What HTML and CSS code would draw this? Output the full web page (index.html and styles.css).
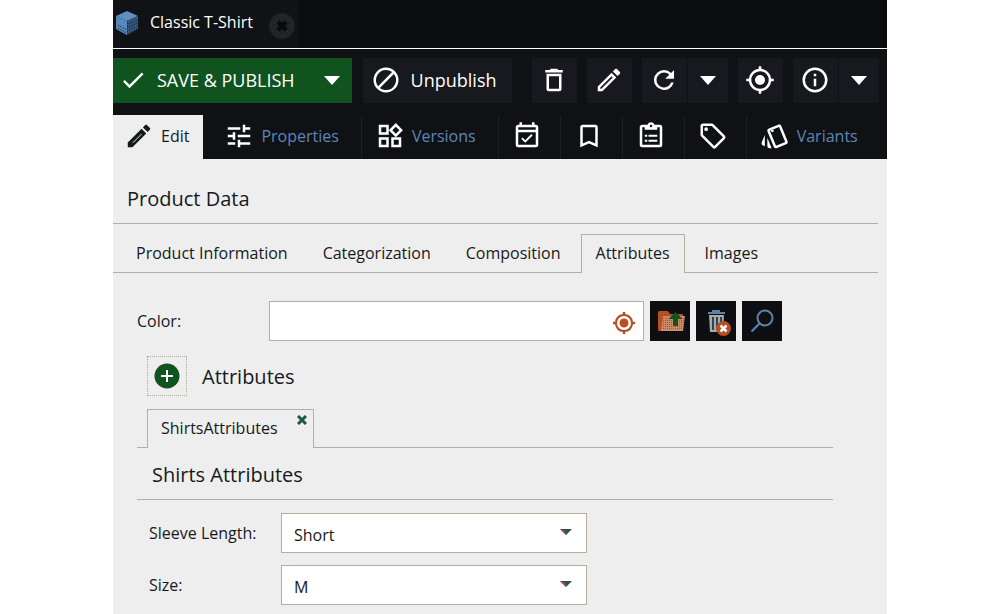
FILE: index.html
```html
<!DOCTYPE html>
<html lang="en">
<head>
<meta charset="utf-8">
<title>Classic T-Shirt</title>
<meta name="viewport" content="width=device-width, initial-scale=1">
<link rel="stylesheet" href="styles.css">
</head>
<body>
<div class="app">
  <header class="doc-bar">
    <div class="doc-tab">
      <svg class="doc-cube" viewBox="0 0 24 26" aria-hidden="true">
        <path fill="#5f8fc4" d="M12 1 23 6 12 11 1 6Z"/>
        <path fill="#5a87bb" d="M1 6 12 11V25L1 19Z"/>
        <path fill="#34557c" d="M23 6 12 11V25L23 19Z"/>
        <path stroke="#16202c" stroke-dasharray="1 1" d="M3 15 11 19.500M3 18 11 22.500M14 14 22 10M14 17 22 13M14 20 22 16M14 23 22 19M12.500 11V25" fill="none"/>
      </svg>
      <span class="doc-name">Classic T-Shirt</span>
      <button class="doc-close" aria-label="Close document">
        <svg viewBox="0 0 26 26"><circle cx="13" cy="13" r="13" fill="#202125"/><circle cx="13" cy="13" r="10.500" fill="none" stroke="#17522a" stroke-dasharray="1 2"/><circle cx="13" cy="13" r="8" fill="none" stroke="#17522a" stroke-dasharray="1 2"/><path d="M9 9 17 17M17 9 9 17" stroke="#08090b" stroke-width="4"/></svg>
      </button>
    </div>
  </header>

  <div class="toolbar">
    <div class="split save">
      <button class="tool tool-save">
        <svg class="icon icon-check" viewBox="0 0 24 24"><path d="M21 7 9 19 3.500 13.500 4.910 12.090 9 16.170 19.590 5.590Z"/></svg>
        <span>SAVE &amp; PUBLISH</span>
      </button>
      <button class="tool tool-arrow" aria-label="More save options"><svg class="caret" viewBox="0 0 16 9"><path d="M0 0H16L8 9Z"/></svg></button>
    </div>
    <button class="tool tool-text">
      <svg class="icon" viewBox="0 0 24 24"><path d="M12 2A10 10 0 1 0 12 22 10 10 0 0 0 12 2M12 4C13.850 4 15.550 4.630 16.900 5.690L5.690 16.900A8 8 0 0 1 12 4M12 20C10.150 20 8.450 19.370 7.100 18.310L18.310 7.100A8 8 0 0 1 12 20Z"/></svg>
      <span>Unpublish</span>
    </button>
    <div class="tool-group">
      <button class="tool tool-icon" aria-label="Delete"><svg class="icon" viewBox="0 0 24 24"><path d="M6 19a2 2 0 0 0 2 2h8a2 2 0 0 0 2-2V7H6v12M8 9h8v10H8V9m7.500-5-1-1h-5l-1 1H5v2h14V4h-3.500Z"/></svg></button>
      <button class="tool tool-icon" aria-label="Rename"><svg class="icon" viewBox="0 0 24 24"><path d="m14.060 9 .940.940L5.920 19H5v-.920L14.060 9m3.600-6c-.250 0-.510.100-.700.290l-1.830 1.830 3.750 3.750 1.830-1.830c.390-.390.390-1.040 0-1.410l-2.340-2.340c-.200-.200-.450-.290-.710-.290m-3.600 3.190L3 17.250V21h3.750L17.810 9.940l-3.750-3.750Z"/></svg></button>
      <div class="split">
        <button class="tool tool-icon" aria-label="Reload"><svg class="icon" viewBox="0 0 24 24"><path d="M17.650 6.350A7.960 7.960 0 0 0 12 4a8 8 0 1 0 7.730 10h-2.080A6 6 0 1 1 12 6c1.660 0 3.140.690 4.220 1.780L13 11h7V4l-2.350 2.350Z"/></svg></button>
        <button class="tool tool-arrow" aria-label="Reload options"><svg class="caret" viewBox="0 0 16 9"><path d="M0 0H16L8 9Z"/></svg></button>
      </div>
      <button class="tool tool-icon" aria-label="Locate in tree"><svg class="icon" viewBox="0 0 24 24"><path d="M12 8a4 4 0 1 0 0 8 4 4 0 0 0 0-8M3.050 13H1v-2h2.050A9 9 0 0 1 11 3.050V1h2v2.050A9 9 0 0 1 20.950 11H23v2h-2.050A9 9 0 0 1 13 20.950V23h-2v-2.050A9 9 0 0 1 3.050 13M12 5a7 7 0 1 0 0 14 7 7 0 0 0 0-14Z"/></svg></button>
      <div class="split">
        <button class="tool tool-icon" aria-label="Info"><svg class="icon" viewBox="0 0 24 24"><path d="M11 9h2V7h-2m1 13a8 8 0 1 1 0-16 8 8 0 0 1 0 16m0-18a10 10 0 1 0 0 20 10 10 0 0 0 0-20m-1 15h2v-6h-2v6Z"/></svg></button>
        <button class="tool tool-arrow" aria-label="Info options"><svg class="caret" viewBox="0 0 16 9"><path d="M0 0H16L8 9Z"/></svg></button>
      </div>
    </div>
  </div>

  <nav class="view-tabs">
    <button class="view-tab view-active">
      <svg class="icon" viewBox="0 0 24 24"><path d="m14.060 9 .940.940L5.920 19H5v-.920L14.060 9m3.600-6c-.250 0-.510.100-.700.290l-1.830 1.830 3.750 3.750 1.830-1.830c.390-.390.390-1.040 0-1.410l-2.340-2.340c-.200-.200-.450-.290-.710-.290m-3.600 3.190L3 17.250V21h3.750L17.810 9.940l-3.750-3.750Z"/><path d="M4 18 14.500 7.500l2 2L6 20H4z"/><path d="M7 17.500 14 10.500" stroke="#d7e2d9" stroke-width=".8"/></svg>
      <span>Edit</span>
    </button>
    <button class="view-tab view-first">
      <svg class="icon" viewBox="0 0 24 24"><path d="M3 17v2h6v-2H3M3 5v2h10V5H3m10 16v-2h8v-2h-8v-2h-2v6h2M7 9v2H3v2h4v2h2V9H7m14 4v-2H11v2h10m-6-4h2V7h4V5h-4V3h-2v6Z"/></svg>
      <span>Properties</span>
    </button>
    <button class="view-tab">
      <svg class="icon" viewBox="0 0 24 24"><path d="m16.660 4.520 2.830 2.830-2.830 2.830-2.830-2.830 2.830-2.830M9 5v4H5V5h4m10 10v4h-4v-4h4M9 15v4H5v-4h4m7.660-13.310L11 7.340 16.660 13l5.660-5.660-5.660-5.650M11 3H3v8h8V3m10 10h-8v8h8v-8m-10 0H3v8h8v-8Z"/></svg>
      <span>Versions</span>
    </button>
    <button class="view-tab view-icon" aria-label="Schedule"><svg class="icon" viewBox="0 0 24 24"><path d="M19 3h-1V1h-2v2H8V1H6v2H5a2 2 0 0 0-2 2v14a2 2 0 0 0 2 2h14a2 2 0 0 0 2-2V5a2 2 0 0 0-2-2m0 16H5V9h14v10m0-12H5V5h14v2m-8.440 10.460 5.930-5.930-1.060-1.060-4.870 4.870-2.110-2.110-1.060 1.060 3.170 3.170Z"/></svg></button>
    <button class="view-tab view-icon" aria-label="Bookmarks"><svg class="icon" viewBox="0 0 24 24"><path d="m17 18-5-2.180L7 18V5h10m0-2H7a2 2 0 0 0-2 2v16l7-3 7 3V5a2 2 0 0 0-2-2Z"/></svg></button>
    <button class="view-tab view-icon" aria-label="Notes"><svg class="icon" viewBox="0 0 24 24"><path fill-rule="evenodd" d="M19 3h-4.180a3 3 0 0 0-5.640 0H5a2 2 0 0 0-2 2v14a2 2 0 0 0 2 2h14a2 2 0 0 0 2-2V5a2 2 0 0 0-2-2M12 3a1 1 0 1 1 0 2 1 1 0 0 1 0-2M7 7h10V5h2v14H5V5h2v2m0 4h2v1.500H7zm3 0h7v1.500h-7zm-3 4h2v1.500H7zm3 0h7v1.500h-7z"/></svg></button>
    <button class="view-tab view-icon" aria-label="Tags"><svg class="icon" viewBox="0 0 24 24"><path d="m21.410 11.580-9-9A2 2 0 0 0 11 2H4a2 2 0 0 0-2 2v7c0 .530.210 1.040.590 1.410l9 9a2 2 0 0 0 2.820 0l7-7a2 2 0 0 0 0-2.830M13 20l-9-9V4h7l9 9M6.500 5a1.500 1.500 0 1 1 0 3 1.500 1.500 0 0 1 0-3Z"/></svg></button>
    <button class="view-tab">
      <svg class="icon" viewBox="0 0 24 24"><path d="m2.530 19.650 1.340.560v-9.030l-2.430 5.860c-.410 1.020.080 2.190 1.090 2.610m19.500-3.700L17.070 3.980a2.010 2.010 0 0 0-2.600-1.080L7.100 5.950a2 2 0 0 0-1.080 2.600l4.960 11.970a2 2 0 0 0 2.600 1.090l7.370-3.050a2 2 0 0 0 1.080-2.610m-9.200 3.800L7.870 7.790l7.350-3.040h.010l4.950 11.950-7.350 3.050M11 7.800A1.100 1.100 0 1 1 8.800 7.800 1.100 1.100 0 0 1 11 7.800M5.880 19.750a2 2 0 0 0 2 2h1.450l-3.450-8.340v6.340Z"/></svg>
      <span>Variants</span>
    </button>
  </nav>

  <main class="content">
    <h1 class="heading page-heading">Product Data</h1>
    <nav class="sub-tabs">
      <button class="sub-tab">Product Information</button>
      <button class="sub-tab">Categorization</button>
      <button class="sub-tab">Composition</button>
      <button class="sub-tab sub-active">Attributes</button>
      <button class="sub-tab">Images</button>
    </nav>

    <div class="panel">
      <div class="field color-field">
        <label for="color">Color:</label>
        <div class="target-box">
          <input class="box" id="color" type="text">
          <svg class="target-mark" viewBox="0 0 24 24" aria-hidden="true"><path d="M12 7.500a4.500 4.500 0 1 0 0 9 4.500 4.500 0 0 0 0-9M3.050 13.200H1v-2.400h2.050A9 9 0 0 1 10.800 3.050V1h2.400v2.050a9 9 0 0 1 7.750 7.750H23v2.400h-2.050a9 9 0 0 1-7.750 7.750V23h-2.400v-2.050a9 9 0 0 1-7.750-7.750M12 5a7 7 0 1 0 0 14 7 7 0 0 0 0-14Z"/></svg>
        </div>
        <button class="square" aria-label="Open">
          <svg viewBox="0 0 40 40"><path fill="#b84f22" d="M9 10h9l2 3h13v17H9q-1 0-1-2V12q0-2 1-2"/><path fill="#c98a69" d="m11 30 2-15h22l-2 15Z"/><path stroke="#b84f22" stroke-dasharray="1 1" d="M13 17.500H34M13 19.500H34M13 21.500H34M13 23.500H34M13 25.500H33M13 27.500H33"/><path fill="#11531f" d="m25.500 11 7 7H28v7h-5v-7h-4.500Z"/></svg>
        </button>
        <button class="square" aria-label="Empty">
          <svg viewBox="0 0 40 40"><path fill="#6082a6" d="M12 11h4V9h8v2h5v2H12Z"/><path fill="#a9aba4" d="M13 14h15l-1 17H14Z"/><path stroke="#27455b" stroke-width="2" d="M17 16v13M21 16v13M25 16v13"/><circle cx="27.500" cy="27.500" r="7.500" fill="#b84f22"/><path stroke="#fff" stroke-width="2.500" d="m24.500 24.500 6 6m0-6-6 6"/></svg>
        </button>
        <button class="square" aria-label="Search">
          <svg viewBox="0 0 40 40"><circle cx="23" cy="17" r="7.500" fill="none" stroke="#6082a6" stroke-width="2"/><path stroke="#5c87bd" stroke-width="2" d="m18 22-8.500 8.500"/></svg>
        </button>
      </div>

      <div class="brick-head">
        <button class="add" aria-label="Add attributes"><svg viewBox="0 0 26 26"><circle cx="13" cy="13" r="12.500" fill="#11531f"/><path stroke="#fff" stroke-width="2" d="M13 7v12M7 13h12"/></svg></button>
        <h2 class="heading">Attributes</h2>
      </div>
      <div class="brick-tabs">
        <div class="brick-tab">
          <span>ShirtsAttributes</span>
          <button class="brick-close" aria-label="Remove ShirtsAttributes"><svg viewBox="0 0 10 10"><path stroke="#235744" stroke-width="3" d="m1 1 8 8m0-8L1 9"/></svg></button>
        </div>
      </div>
      <h3 class="heading brick-heading">Shirts Attributes</h3>
      <div class="brick-fields">
        <div class="field">
          <label for="sleeve">Sleeve Length:</label>
          <div class="choice"><select class="box" id="sleeve"><option>Short</option></select><svg class="choice-mark" viewBox="0 0 12 6" aria-hidden="true"><path d="M0 0H12L6 6Z"/><path fill="#a94e28" d="M1 1H4L6 4V6Z"/></svg></div>
        </div>
        <div class="field">
          <label for="size">Size:</label>
          <div class="choice"><select class="box" id="size"><option>M</option></select><svg class="choice-mark" viewBox="0 0 12 6" aria-hidden="true"><path d="M0 0H12L6 6Z"/><path fill="#a94e28" d="M1 1H4L6 4V6Z"/></svg></div>
        </div>
      </div>
    </div>
  </main>
</div>
</body>
</html>
```
FILE: styles.css
```css
* { box-sizing: border-box; }

body {
  margin: 0;
  padding: 0 114px 0 113px;
  background: #fff;
  color: #16191c;
  font: 16px/24px "Open Sans", "Noto Sans", sans-serif;
}

button, input, select { font: inherit; color: inherit; }
button { margin: 0; padding: 0; border: 0; background: none; cursor: pointer; }
svg { display: block; flex: none; }

.app { display: flex; flex-direction: column; min-height: 100vh; background: #eee; }

/* Document bar */
.doc-bar { display: flex; height: 49px; background: #0a0c0e; border-bottom: 1px solid #fff; }
.doc-tab { display: flex; align-items: flex-start; width: 186px; padding: 10px 0 0 2px; background: #101215; color: #fff; }
.doc-cube { width: 24px; height: 26px; }
.doc-name { margin-left: 11px; }
.doc-close { margin: 3px 0 0 16px; }
.doc-close svg { width: 26px; height: 26px; }

/* Toolbar */
.toolbar { display: flex; gap: 11px; padding: 9px 6px 12px 0; background: #0f1114; color: #fff; }
.tool-group { display: flex; gap: 10px; margin-left: 9px; }
.split { display: flex; gap: 1px; }
.tool { display: flex; align-items: center; justify-content: center; height: 45px; padding-bottom: 1px; background: #18191e; white-space: nowrap; font-size: 18px; }
.tool-icon { width: 45px; }
.tool-arrow { width: 40px; }
.tool-text { gap: 10px; padding: 0 15px 1px 8px; }
.save { gap: 0; }
.save .tool { background: #11531f; }
.tool-save { gap: 10px; padding: 0 17px 1px 6px; }
.icon { width: 30px; height: 30px; fill: currentColor; }
.icon-check { width: 28px; height: 28px; }
.caret { width: 16px; height: 9px; fill: #fff; }

/* View tabs */
.view-tabs { display: flex; background: #0f1114; }
.view-tab { display: flex; align-items: center; gap: 7px; height: 44px; padding: 0 22px 2px 13px; border-left: 1px solid #1c1e22; color: #fff; }
.view-tab span { color: #5d87b8; }
.view-active { padding: 0 14px 2px 10px; background: #eee; color: #16191c; }
.view-active span { color: #16191c; }
.view-active, .view-first { border-color: transparent; }
.view-first { padding-left: 20px; }
.view-icon { padding: 0 18px 2px 13px; }

/* Content */
.content { flex: 1; padding-right: 9px; }
.heading { margin: 0; font-size: 20px; line-height: 28px; font-weight: 400; }
.page-heading { padding: 26px 14px 10px; border-bottom: 1px solid #b8ae9d; }
.sub-tabs { display: flex; gap: 5px; margin-top: 10px; padding-left: 8px; border-bottom: 1px solid #b8ae9d; }
.sub-tab { height: 39px; margin-bottom: -1px; padding: 0 14px 2px; border: 1px solid transparent; border-bottom: 0; white-space: nowrap; }
.sub-active { border-color: #b8ae9d; background: #eee; }

.panel { padding: 28px 45px 9px 24px; }
.field { display: flex; align-items: center; }
.box { display: block; width: 100%; height: 40px; padding: 0 12px; border: 1px solid #b8ae9d; border-radius: 0; background: #fff; }
.color-field { gap: 6px; }
.color-field label { width: 126px; }
.target-box { position: relative; width: 375px; }
.target-mark { position: absolute; right: 8px; top: 10px; width: 24px; height: 24px; fill: #b84f22; }
.square { background: #0d0f12; }
.square svg { width: 40px; height: 40px; }

.brick-head { display: flex; align-items: center; gap: 15px; margin: 15px 0 13px 10px; }
.brick-head .heading { padding-top: 2px; }
.add { display: grid; place-items: center; width: 40px; height: 40px; border: 1px dotted #b0a999; }
.add svg { width: 26px; height: 26px; }
.brick-tabs { display: flex; padding-left: 10px; border-bottom: 1px solid #b8ae9d; }
.brick-tab { position: relative; height: 39px; margin-bottom: -1px; padding: 6px 35px 0 13px; border: 1px solid #b8ae9d; border-bottom: 0; background: #eee; }
.brick-close { position: absolute; right: 6px; top: 5px; }
.brick-close svg { width: 10px; height: 10px; }
.brick-heading { padding: 13px 15px 10px; border-bottom: 1px solid #b8ae9d; }
.brick-fields { display: grid; gap: 12px; padding: 13px 0 0 12px; }
.brick-fields label { width: 132px; }
.choice { position: relative; width: 306px; }
.choice select { padding-top: 4px; appearance: none; }
.choice-mark { position: absolute; right: 15px; top: 16px; width: 12px; height: 6px; fill: #2b4f55; pointer-events: none; }
```
